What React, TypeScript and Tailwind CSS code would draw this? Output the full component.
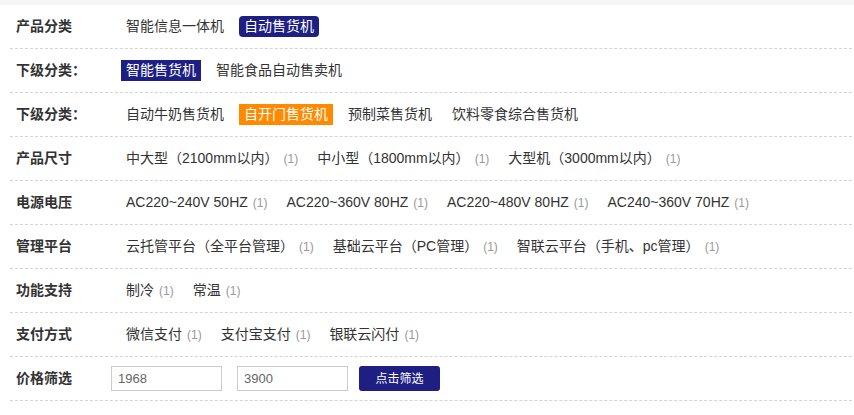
import React from 'react';

type Item = { name: string; count?: number; active?: 'navy' | 'navyRound' | 'orange' };
type Row = { label: string; items: Item[] };

const rows: Row[] = [
  {
    label: '产品分类',
    items: [{ name: '智能信息一体机' }, { name: '自动售货机', active: 'navyRound' }],
  },
  {
    label: '下级分类：',
    items: [{ name: '智能售货机', active: 'navy' }, { name: '智能食品自动售卖机' }],
  },
  {
    label: '下级分类：',
    items: [
      { name: '自动牛奶售货机' },
      { name: '自开门售货机', active: 'orange' },
      { name: '预制菜售货机' },
      { name: '饮料零食综合售货机' },
    ],
  },
  {
    label: '产品尺寸',
    items: [
      { name: '中大型（2100mm以内）', count: 1 },
      { name: '中小型（1800mm以内）', count: 1 },
      { name: '大型机（3000mm以内）', count: 1 },
    ],
  },
  {
    label: '电源电压',
    items: [
      { name: 'AC220~240V 50HZ', count: 1 },
      { name: 'AC220~360V 80HZ', count: 1 },
      { name: 'AC220~480V 80HZ', count: 1 },
      { name: 'AC240~360V 70HZ', count: 1 },
    ],
  },
  {
    label: '管理平台',
    items: [
      { name: '云托管平台（全平台管理）', count: 1 },
      { name: '基础云平台（PC管理）', count: 1 },
      { name: '智联云平台（手机、pc管理）', count: 1 },
    ],
  },
  {
    label: '功能支持',
    items: [
      { name: '制冷', count: 1 },
      { name: '常温', count: 1 },
    ],
  },
  {
    label: '支付方式',
    items: [
      { name: '微信支付', count: 1 },
      { name: '支付宝支付', count: 1 },
      { name: '银联云闪付', count: 1 },
    ],
  },
];

function Chip({ item }: { item: Item }) {
  let cls = 'text-[#333]';
  if (item.active === 'navyRound') cls = 'bg-[#1d1f82] text-white rounded-[4px]';
  if (item.active === 'navy') cls = 'bg-[#1d1f82] text-white';
  if (item.active === 'orange') cls = 'bg-[#ff8a00] text-white';
  return (
    <a className="flex items-center mr-[10px] cursor-pointer">
      <span className={`px-[5px] leading-[21px] text-[14px] ${cls}`}>{item.name}</span>
      {item.count !== undefined && (
        <span className="mr-[4px] text-[12px] text-[#999]">({item.count})</span>
      )}
    </a>
  );
}

export default function App() {
  return (
    <div
      className="min-h-[415px] bg-white"
      style={{ fontFamily: '"Liberation Sans", Arial, "Noto Sans CJK SC", sans-serif' }}
    >
      <div className="h-[5px] bg-[#f5f5f5]" />
      <div className="pl-[10px] pr-[2px]">
        {rows.map((row, i) => (
          <div
            key={i}
            className="flex items-center h-[44px] border-b border-dashed border-[#d4d4d4]"
          >
            <div className="w-[111px] pl-[6px] text-[14px] font-bold text-[#333]">{row.label}</div>
            <div className="flex items-center">
              {row.items.map((it, j) => (
                <Chip key={j} item={it} />
              ))}
            </div>
          </div>
        ))}
        <div className="flex items-center h-[44px] border-b border-dashed border-[#d4d4d4]">
          <div className="w-[101px] pl-[6px] text-[14px] font-bold text-[#333]">价格筛选</div>
          <input
            defaultValue="1968"
            className="w-[111px] h-[25px] border border-[#ccc] pl-[6px] text-[13px] text-[#666] outline-none"
          />
          <input
            defaultValue="3900"
            className="ml-[15px] w-[111px] h-[25px] border border-[#ccc] pl-[6px] text-[13px] text-[#666] outline-none"
          />
          <button className="ml-[11px] w-[81px] h-[25px] rounded-[3px] bg-[#1d1f82] text-white text-[12px]">
            点击筛选
          </button>
        </div>
      </div>
    </div>
  );
}
